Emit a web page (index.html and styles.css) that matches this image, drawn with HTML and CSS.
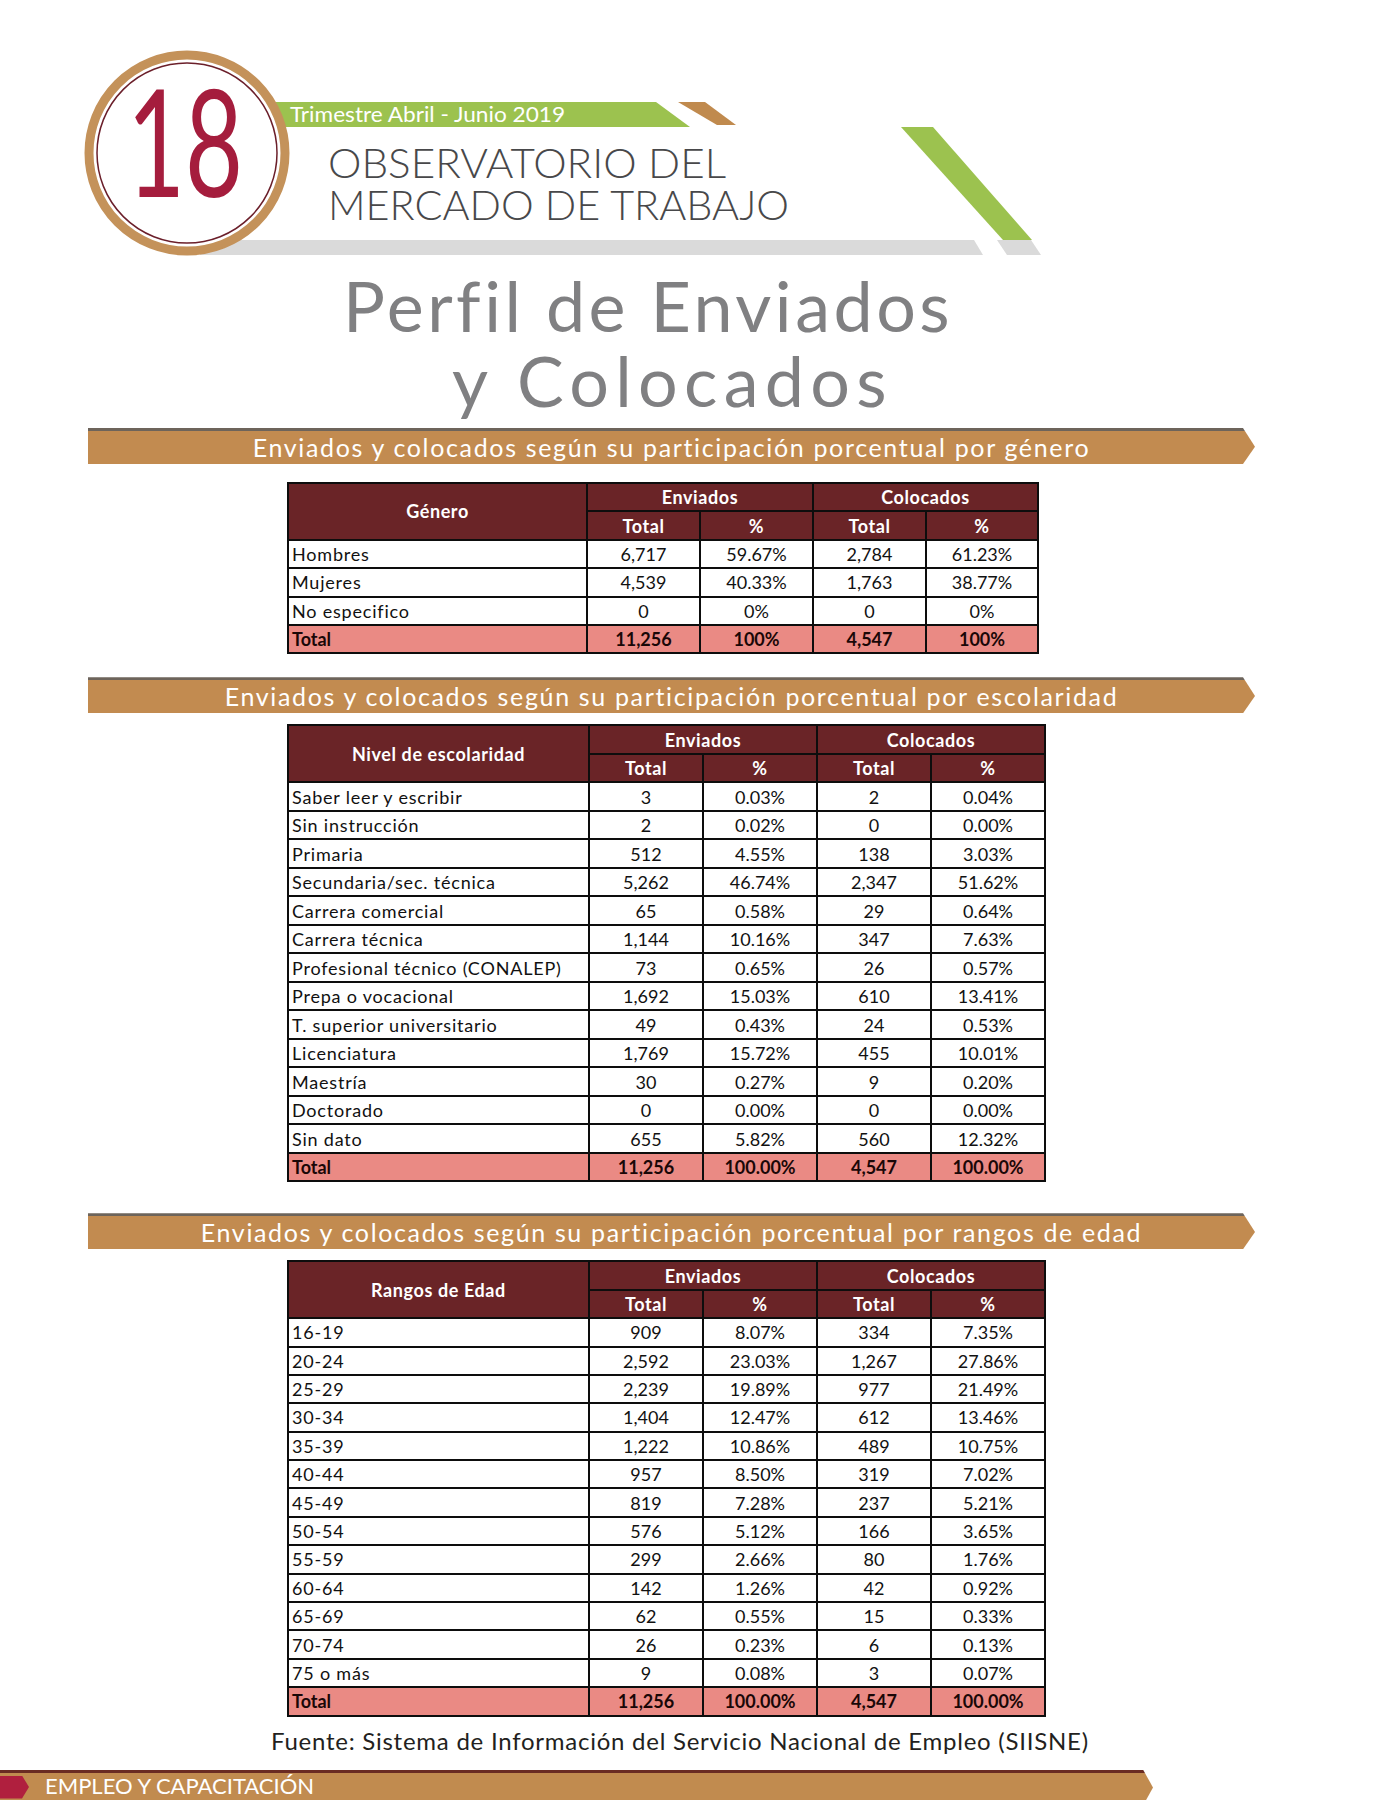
FILE: index.html
```
<!DOCTYPE html>
<html lang="es">
<head>
<meta charset="utf-8">
<title>Perfil de Enviados y Colocados</title>
<link rel="stylesheet" href="styles.css">
</head>
<body>
<div class="page">
  <svg class="masthead" width="1391" height="262" viewBox="0 0 1391 262" xmlns="http://www.w3.org/2000/svg">
    <polygon class="gray" points="200,240 974,240 983,255 200,255"/>
    <polygon class="gray" points="997,240 1031,240 1041,255 1007,255"/>
    <polygon class="green" points="901,127 933,127 1032,240 1003,240"/>
    <polygon class="green" points="270,102 656,102 690,127 270,127"/>
    <polygon class="tan" points="678,102 705,102 736,125 717,125"/>
    <circle class="ring" cx="187" cy="153" r="98"/>
    <circle class="ring-inner" cx="187" cy="153" r="90"/>
    <text class="issue" x="127" y="197" textLength="116" lengthAdjust="spacingAndGlyphs">18</text>
    <text class="quarter" x="290" y="122" textLength="275" lengthAdjust="spacingAndGlyphs">Trimestre Abril - Junio  2019</text>
    <text class="obs" x="328" y="178" textLength="398" lengthAdjust="spacingAndGlyphs">OBSERVATORIO DEL</text>
    <text class="obs" x="328" y="220" textLength="461" lengthAdjust="spacingAndGlyphs">MERCADO DE TRABAJO</text>
  </svg>

  <h1 class="title"><span class="t1">Perfil de Enviados</span><span class="t2">y Colocados</span></h1>

  <div class="banner b1"><span>Enviados y colocados según su participación porcentual por género</span></div>
  <table class="data t-gen">
    <colgroup><col class="c-label-s"><col class="c-n1"><col class="c-n1"><col class="c-n1"><col class="c-n2"></colgroup>
    <thead>
      <tr><th rowspan="2">Género</th><th colspan="2">Enviados</th><th colspan="2">Colocados</th></tr>
      <tr><th>Total</th><th>%</th><th>Total</th><th>%</th></tr>
    </thead>
    <tbody>
      <tr><td>Hombres</td><td>6,717</td><td>59.67%</td><td>2,784</td><td>61.23%</td></tr>
      <tr><td>Mujeres</td><td>4,539</td><td>40.33%</td><td>1,763</td><td>38.77%</td></tr>
      <tr><td>No especifico</td><td>0</td><td>0%</td><td>0</td><td>0%</td></tr>
      <tr class="total"><td>Total</td><td>11,256</td><td>100%</td><td>4,547</td><td>100%</td></tr>
    </tbody>
  </table>

  <div class="banner b2"><span>Enviados y colocados según su participación porcentual por escolaridad</span></div>
  <table class="data t-esc">
    <colgroup><col class="c-label"><col class="c-n"><col class="c-n"><col class="c-n"><col class="c-n"></colgroup>
    <thead>
      <tr><th rowspan="2">Nivel de escolaridad</th><th colspan="2">Enviados</th><th colspan="2">Colocados</th></tr>
      <tr><th>Total</th><th>%</th><th>Total</th><th>%</th></tr>
    </thead>
    <tbody>
      <tr><td>Saber leer y escribir</td><td>3</td><td>0.03%</td><td>2</td><td>0.04%</td></tr>
      <tr><td>Sin instrucción</td><td>2</td><td>0.02%</td><td>0</td><td>0.00%</td></tr>
      <tr><td>Primaria</td><td>512</td><td>4.55%</td><td>138</td><td>3.03%</td></tr>
      <tr><td>Secundaria/sec. técnica</td><td>5,262</td><td>46.74%</td><td>2,347</td><td>51.62%</td></tr>
      <tr><td>Carrera comercial</td><td>65</td><td>0.58%</td><td>29</td><td>0.64%</td></tr>
      <tr><td>Carrera técnica</td><td>1,144</td><td>10.16%</td><td>347</td><td>7.63%</td></tr>
      <tr><td>Profesional técnico (CONALEP)</td><td>73</td><td>0.65%</td><td>26</td><td>0.57%</td></tr>
      <tr><td>Prepa o vocacional</td><td>1,692</td><td>15.03%</td><td>610</td><td>13.41%</td></tr>
      <tr><td>T. superior universitario</td><td>49</td><td>0.43%</td><td>24</td><td>0.53%</td></tr>
      <tr><td>Licenciatura</td><td>1,769</td><td>15.72%</td><td>455</td><td>10.01%</td></tr>
      <tr><td>Maestría</td><td>30</td><td>0.27%</td><td>9</td><td>0.20%</td></tr>
      <tr><td>Doctorado</td><td>0</td><td>0.00%</td><td>0</td><td>0.00%</td></tr>
      <tr><td>Sin dato</td><td>655</td><td>5.82%</td><td>560</td><td>12.32%</td></tr>
      <tr class="total"><td>Total</td><td>11,256</td><td>100.00%</td><td>4,547</td><td>100.00%</td></tr>
    </tbody>
  </table>

  <div class="banner b3"><span>Enviados y colocados según su participación porcentual por rangos de edad</span></div>
  <table class="data t-age">
    <colgroup><col class="c-label"><col class="c-n"><col class="c-n"><col class="c-n"><col class="c-n"></colgroup>
    <thead>
      <tr><th rowspan="2">Rangos de Edad</th><th colspan="2">Enviados</th><th colspan="2">Colocados</th></tr>
      <tr><th>Total</th><th>%</th><th>Total</th><th>%</th></tr>
    </thead>
    <tbody>
      <tr><td>16-19</td><td>909</td><td>8.07%</td><td>334</td><td>7.35%</td></tr>
      <tr><td>20-24</td><td>2,592</td><td>23.03%</td><td>1,267</td><td>27.86%</td></tr>
      <tr><td>25-29</td><td>2,239</td><td>19.89%</td><td>977</td><td>21.49%</td></tr>
      <tr><td>30-34</td><td>1,404</td><td>12.47%</td><td>612</td><td>13.46%</td></tr>
      <tr><td>35-39</td><td>1,222</td><td>10.86%</td><td>489</td><td>10.75%</td></tr>
      <tr><td>40-44</td><td>957</td><td>8.50%</td><td>319</td><td>7.02%</td></tr>
      <tr><td>45-49</td><td>819</td><td>7.28%</td><td>237</td><td>5.21%</td></tr>
      <tr><td>50-54</td><td>576</td><td>5.12%</td><td>166</td><td>3.65%</td></tr>
      <tr><td>55-59</td><td>299</td><td>2.66%</td><td>80</td><td>1.76%</td></tr>
      <tr><td>60-64</td><td>142</td><td>1.26%</td><td>42</td><td>0.92%</td></tr>
      <tr><td>65-69</td><td>62</td><td>0.55%</td><td>15</td><td>0.33%</td></tr>
      <tr><td>70-74</td><td>26</td><td>0.23%</td><td>6</td><td>0.13%</td></tr>
      <tr><td>75 o más</td><td>9</td><td>0.08%</td><td>3</td><td>0.07%</td></tr>
      <tr class="total"><td>Total</td><td>11,256</td><td>100.00%</td><td>4,547</td><td>100.00%</td></tr>
    </tbody>
  </table>

  <p class="source">Fuente: Sistema de Información del Servicio Nacional de Empleo (SIISNE)</p>

  <footer class="footer">
    <span class="footer-flag"></span>
    <span class="footer-text">EMPLEO Y CAPACITACIÓN</span>
  </footer>
</div>
</body>
</html>
```

FILE: styles.css
```
html, body {
  margin: 0;
  padding: 0;
  background: #ffffff;
}

body {
  font-family: Lato, "Open Sans", sans-serif;
  color: #111;
  overflow: hidden;
}

.page {
  width: 1391px;
  height: 1800px;
  overflow: hidden;
}

/* ---------- masthead ---------- */
.masthead {
  display: block;
}
.masthead .gray { fill: #dadada; }
.masthead .green { fill: #9cc24f; }
.masthead .tan { fill: #c08a4e; }
.masthead .ring {
  fill: #ffffff;
  stroke: #c4925a;
  stroke-width: 9;
}
.masthead .ring-inner {
  fill: none;
  stroke: #6b1f2a;
  stroke-width: 1.5;
}
.masthead .issue {
  font-family: Lato, sans-serif;
  font-weight: 400;
  font-size: 150px;
  fill: #a51d3d;
}
.masthead .quarter {
  font-family: Lato, sans-serif;
  font-weight: 400;
  font-size: 21px;
  fill: #ffffff;
}
.masthead .obs {
  font-family: Lato, sans-serif;
  font-weight: 300;
  font-size: 42px;
  fill: #48484a;
}

/* ---------- title ---------- */
.title {
  margin: 6px 0 0 0;
  font-family: Lato, sans-serif;
  font-weight: 400;
  font-size: 70px;
  line-height: 75px;
  color: #808082;
}
.title .t1 {
  display: block;
  padding-left: 343px;
  letter-spacing: 3.5px;
}
.title .t2 {
  display: block;
  padding-left: 452px;
  letter-spacing: 6.3px;
}

/* ---------- section banners ---------- */
.banner {
  margin-left: 88px;
  width: 1167px;
  height: 36px;
  background: linear-gradient(#6d645b 0 3px, #c28b50 3px);
  clip-path: polygon(0 0, 1155px 0, 1167px 52%, 1155px 100%, 0 100%);
  display: flex;
  justify-content: center;
  align-items: flex-start;
  padding-top: 3px;
  box-sizing: border-box;
}
.banner span {
  font-family: Lato, sans-serif;
  font-weight: 400;
  font-size: 25px;
  line-height: 33px;
  letter-spacing: 1.65px;
  color: #ffffff;
  white-space: nowrap;
}
.b1 { margin-top: 10px; }
.b2 { margin-top: 23px; }
.b3 { margin-top: 31px; }

/* ---------- tables ---------- */
.data {
  margin-left: 287px;
  border-collapse: collapse;
  table-layout: fixed;
  font-family: Lato, sans-serif;
  font-size: 18px;
}
.t-gen { width: 750px; margin-top: 18px; }
.t-esc { width: 758px; margin-top: 11px; }
.t-age { width: 758px; margin-top: 11px; }

.c-label-s { width: 299px; }
.c-n1 { width: 113px; }
.c-n2 { width: 112px; }
.c-label { width: 301px; }
.c-n { width: 114px; }

.data th,
.data td {
  border: 2px solid #0d0d0d;
  padding: 0;
  text-align: center;
  white-space: nowrap;
  overflow: hidden;
}
.data tr { height: 28.4px; }
.t-esc tr { height: 28.5px; }
.t-age tr { height: 28.4px; }

.data th {
  background: #6a2427;
  color: #ffffff;
  font-weight: 700;
  letter-spacing: 0.6px;
}
.data td {
  color: #111;
  font-weight: 400;
}
.data td:first-child {
  text-align: left;
  padding-left: 3px;
  letter-spacing: 0.8px;
}
.data .total td {
  background: #ea8a84;
  font-weight: 700;
  color: #1a0707;
}
.data .total td:first-child {
  letter-spacing: 0;
}

/* ---------- source ---------- */
.source {
  margin: 10px 0 0 271px;
  font-family: Lato, sans-serif;
  font-size: 24px;
  line-height: 28px;
  letter-spacing: 0.75px;
  color: #231f20;
  white-space: nowrap;
}

/* ---------- footer ---------- */
.footer {
  margin-top: 15px;
  width: 1153px;
  height: 36px;
  background: linear-gradient(#6a2b22 0 3px, #c18b4f 3px);
  clip-path: polygon(0 0, 1143px 0, 1153px 50%, 1143px 100%, 0 100%);
  display: flex;
  align-items: flex-start;
  padding-top: 6px;
  box-sizing: border-box;
}
.footer-flag {
  width: 29px;
  height: 23px;
  background: #b01f3e;
  clip-path: polygon(0 0, 22px 0, 29px 50%, 22px 100%, 0 100%);
  flex: none;
}
.footer-text {
  margin-left: 16px;
  margin-top: -2px;
  font-family: Lato, sans-serif;
  font-weight: 400;
  font-size: 22px;
  line-height: 24px;
  color: #ffffff;
}
```
